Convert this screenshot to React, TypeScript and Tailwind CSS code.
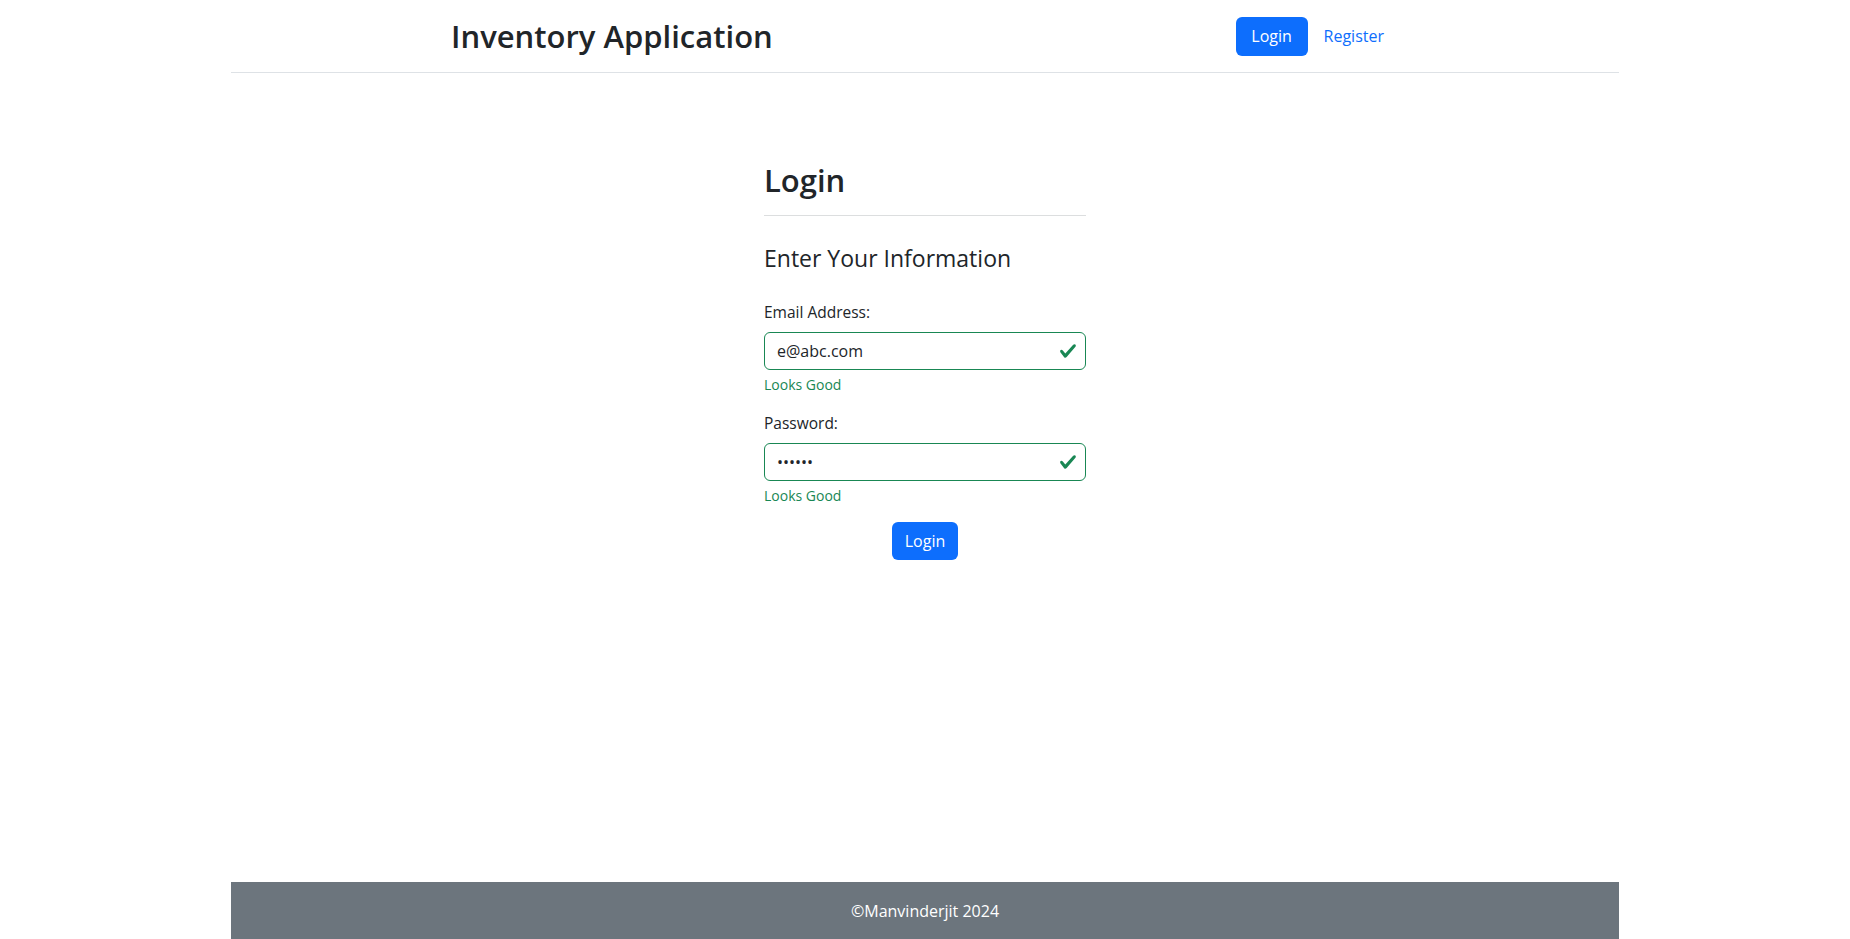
import React from 'react';

const CheckIcon = () => (
  <svg viewBox="0 0 8 8" className="absolute right-[9px] top-1/2 h-[18px] w-[18px] -translate-y-1/2">
    <path
      fill="#198754"
      d="M2.3 6.73.6 4.53c-.4-1.04.46-1.4 1.1-.8l1.1 1.4 3.4-3.8c.6-.63 1.6-.27 1.2.7l-4 4.6c-.43.5-.8.4-1.1.1z"
    />
  </svg>
);

const Field = ({ label, value, type }: { label: string; value: string; type: string }) => (
  <div className="mb-4">
    <label className="mb-2 block text-[15.5px] leading-6">{label}</label>
    <div className="relative">
      <input
        type={type}
        defaultValue={value}
        readOnly
        className="block h-[38px] w-full rounded-[6px] border border-[#198754] py-1.5 pl-3 pr-9 text-base leading-6 text-[#212529] outline-none"
      />
      <CheckIcon />
    </div>
    <div className="mt-1 text-sm leading-[21px] text-[#198754]">Looks Good</div>
  </div>
);

export default function App() {
  return (
    <div
      className="flex min-h-screen flex-col bg-white text-[#212529]"
      style={{ fontFamily: '"Open Sans", "Noto Sans", sans-serif' }}
    >
      <header className="mx-auto w-[1388px] border-b border-[#dee2e6]">
        <div className="flex h-[72px] items-center justify-between pl-[220px] pr-[219px]">
          <h1 className="text-[31px] font-semibold leading-tight">Inventory Application</h1>
          <nav className="flex items-center">
            <a className="flex h-[39px] w-[72px] items-center justify-center rounded-[6px] bg-[#0d6efd] text-base text-white">
              Login
            </a>
            <a className="px-4 py-2 text-base text-[#0d6efd]">Register</a>
          </nav>
        </div>
      </header>

      <main className="mx-auto w-[322px] pt-[89px]">
        <h2 className="mb-[7px] text-[31px] font-semibold leading-[1.2]">Login</h2>
        <hr className="mb-[29px] mt-4 border-t border-[#dcdedf]" />
        <h4 className="mb-[27px] text-[23px] font-normal leading-[1.2]">Enter Your Information</h4>
        <form>
          <Field label="Email Address:" value="e@abc.com" type="email" />
          <Field label="Password:" value="secret" type="password" />
          <div className="flex justify-center">
            <button
              type="button"
              className="flex h-[38px] w-[66px] items-center justify-center rounded-[6px] bg-[#0d6efd] text-base text-white"
            >
              Login
            </button>
          </div>
        </form>
      </main>

      <footer className="mx-auto mt-auto flex h-[57px] w-[1388px] items-center justify-center bg-[#6c757d] text-base text-white">
        ©Manvinderjit 2024
      </footer>
    </div>
  );
}
